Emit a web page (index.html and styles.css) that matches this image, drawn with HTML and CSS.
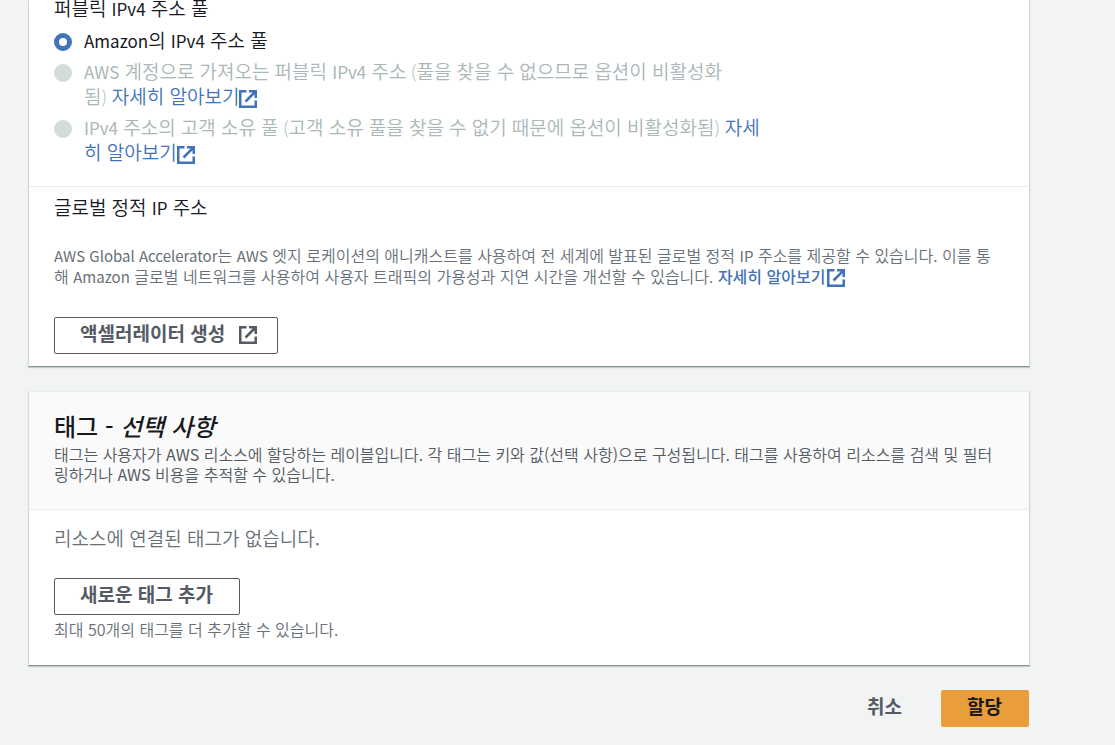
FILE: index.html
```html
<!DOCTYPE html>
<html lang="ko">
<head>
<meta charset="utf-8">
<meta name="viewport" content="width=device-width, initial-scale=1">
<title>탄력적 IP 주소 할당</title>
<link rel="stylesheet" href="styles.css">
</head>
<body>
<svg class="sprite" aria-hidden="true">
  <symbol id="external" viewBox="0 0 18 18">
    <path d="M7.500 1.250H1.250v15.500h15.500V10.500M10 1.250h6.750V8M16 2L6.500 11.500" fill="none" stroke="currentColor" stroke-width="2.500"/>
  </symbol>
</svg>
<form class="page">
  <section class="card card-first">
    <fieldset class="pool">
      <legend class="label">퍼블릭 <span class="latin">IPv4</span> 주소 풀</legend>
      <div class="option">
        <input class="radio" type="radio" name="pool" id="pool-amazon" checked>
        <div class="option-text"><label class="name" for="pool-amazon"><span class="latin">Amazon</span>의 <span class="latin">IPv4</span> 주소 풀</label></div>
      </div>
      <div class="option">
        <input class="radio" type="radio" name="pool" id="pool-byoip" disabled>
        <div class="option-text"><label class="name muted" for="pool-byoip"><span class="latin">AWS</span> 계정으로 가져오는 퍼블릭 <span class="latin">IPv4</span> 주소 (풀을 찾을 수 없으므로 옵션이 비활성화<br>됨)</label> <a class="link" href="#">자세히 알아보기<svg class="icon"><use href="#external"/></svg></a></div>
      </div>
      <div class="option">
        <input class="radio" type="radio" name="pool" id="pool-customer" disabled>
        <div class="option-text"><label class="name muted" for="pool-customer"><span class="latin">IPv4</span> 주소의 고객 소유 풀 (고객 소유 풀을 찾을 수 없기 때문에 옵션이 비활성화됨)</label> <a class="link" href="#">자세<br>히 알아보기<svg class="icon"><use href="#external"/></svg></a></div>
      </div>
    </fieldset>
    <div class="accelerator">
      <h3 class="label">글로벌 정적 <span class="latin">IP</span> 주소</h3>
      <p class="hint"><span class="latin">AWS Global Accelerator</span>는 <span class="latin">AWS</span> 엣지 로케이션의 애니캐스트를 사용하여 전 세계에 발표된 글로벌 정적 <span class="latin">IP</span> 주소를 제공할 수 있습니다. 이를 통<br>해 <span class="latin">Amazon</span> 글로벌 네트워크를 사용하여 사용자 트래픽의 가용성과 지연 시간을 개선할 수 있습니다. <a class="link strong" href="#">자세히 알아보기<svg class="icon"><use href="#external"/></svg></a></p>
      <button class="button" type="button">액셀러레이터 생성<svg class="icon button-icon"><use href="#external"/></svg></button>
    </div>
  </section>
  <section class="card">
    <header class="card-head">
      <h2 class="title">태그 - <em>선택 사항</em></h2>
      <p class="description">태그는 사용자가 <span class="latin">AWS</span> 리소스에 할당하는 레이블입니다. 각 태그는 키와 값(선택 사항)으로 구성됩니다. 태그를 사용하여 리소스를 검색 및 필터<br>링하거나 <span class="latin">AWS</span> 비용을 추적할 수 있습니다.</p>
    </header>
    <div class="tags">
      <p class="empty">리소스에 연결된 태그가 없습니다.</p>
      <button class="button" type="button">새로운 태그 추가</button>
      <p class="limit">최대 50개의 태그를 더 추가할 수 있습니다.</p>
    </div>
  </section>
  <footer class="actions">
    <button class="button plain" type="button">취소</button>
    <button class="button primary" type="submit">할당</button>
  </footer>
</form>
</body>
</html>
```
FILE: styles.css
```css
* { box-sizing: border-box; }
body {
  margin: 0;
  background: #f2f3f3;
  color: #16191f;
  font: 350 19px/25px "Noto Sans CJK KR", sans-serif;
}
h2, h3, p { margin: 0; }
.sprite { position: absolute; width: 0; height: 0; }
.page { padding: 0 85px 18px 28px; }
.card {
  margin-bottom: 24px;
  background: #fff;
  border: 1px solid #d5dbdb;
  border-top-color: #eaeded;
  border-bottom-color: #879196;
  box-shadow: 0 1px 1px #c5cacb;
}
.card-first { border-top: 0; }
.pool {
  margin: 0;
  padding: 0 25px 22px;
  border: 0;
  border-bottom: 1px solid #eaeded;
}
.label { padding: 0; font-size: 19px; line-height: 25px; font-weight: 350; }
.label, .name { font-family: Lato, "Noto Sans CJK KR", sans-serif; }
.name { line-height: 1; }
.name br { line-height: 25px; }
.latin { font-family: "Noto Sans CJK KR", sans-serif; font-size: 17px; font-weight: 400; line-height: 1; }
.pool .label { height: 19px; line-height: 16px; }
.option { display: flex; gap: 12px; margin-top: 6px; }
.pool .label + .option { margin-top: 8px; }
.radio {
  appearance: none;
  flex: none;
  width: 18px;
  height: 18px;
  margin: 6px 0 0;
  border-radius: 50%;
  background: #d5dbdb;
}
.radio:checked { border: 5px solid #4272b8; background: #fff; }
.muted { color: #aab7b8; }
.link { color: #4272b8; text-decoration: none; }
.strong { font-weight: 500; }
.icon { width: 18px; height: 18px; vertical-align: -4px; }
.accelerator { padding: 8px 25px 12px; }
.hint {
  margin: 25px 0 30px;
  color: #687078;
  font-size: 16px;
  line-height: 21px;
}
.hint .latin { font-size: 15px; }
.hint .icon { margin-left: 2px; }
.button {
  height: 37px;
  padding: 0 26px 7px 25px;
  border: 1px solid #545b64;
  border-radius: 2px;
  background: #fff;
  color: #545b64;
  font: 700 19px/25px "Noto Sans CJK KR", sans-serif;
}
.button-icon { margin-left: 14px; margin-right: -6px; vertical-align: -3px; }
.card-head {
  padding: 19px 25px 25px;
  background: #fafafa;
  border-bottom: 1px solid #eaeded;
}
.title { margin-bottom: 3px; font-size: 24px; line-height: 30px; font-weight: 500; }
.description { color: #545b64; font-size: 16px; line-height: 20px; }
.description .latin { font-size: 16px; }
.tags { padding: 15px 25px 26px; color: #687078; }
.empty { margin-bottom: 28px; }
.limit { margin-top: 4px; font-size: 16px; line-height: 20px; }
.actions { display: flex; justify-content: flex-end; gap: 12px; padding-right: 1px; }
.plain { border-color: transparent; background: transparent; }
.primary { border-color: #e99e3b; background: #e99e3b; color: #16191f; }
```
